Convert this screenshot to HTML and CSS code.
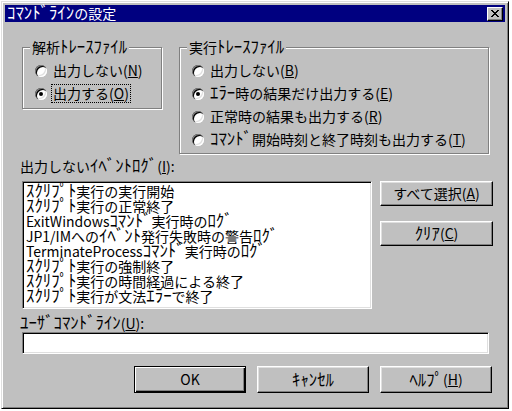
FILE: index.html
```html
<!DOCTYPE html>
<html lang="ja">
<head>
<meta charset="utf-8">
<link rel="stylesheet" href="styles.css">
</head>
<body>
<div class="dialog">
  <div class="titlebar">
    <span class="title"><span class="hk">ｺﾏﾝﾄﾞﾗｲﾝ</span>の設定</span>
    <span class="close">
      <svg width="8" height="7" viewBox="0 0 8 7"><path d="M0 0h2v1h1v1h2V1h1V0h2v1H7v1H6v1H5v1h1v1h1v1h1v1H6V6H5V5H3v1H2v1H0V6h1V5h1V4h1V3H2V2H1V1H0z" fill="#000"/></svg>
    </span>
  </div>
  <div class="content">
    <div class="groups">
      <div class="group group-parse">
        <div class="group-title">解析<span class="hk">ﾄﾚｰｽﾌｧｲﾙ</span></div>
        <div class="option"><span class="radio"></span><span class="opt-label">出力しない(<u>N</u>)</span></div>
        <div class="option"><span class="radio checked"></span><span class="opt-label focus">出力する(<u>O</u>)</span></div>
      </div>
      <div class="group group-exec">
        <div class="group-title">実行<span class="hk">ﾄﾚｰｽﾌｧｲﾙ</span></div>
        <div class="option"><span class="radio"></span><span class="opt-label">出力しない(<u>B</u>)</span></div>
        <div class="option"><span class="radio checked"></span><span class="opt-label"><span class="hk">ｴﾗｰ</span>時の結果だけ出力する(<u>E</u>)</span></div>
        <div class="option"><span class="radio"></span><span class="opt-label">正常時の結果も出力する(<u>R</u>)</span></div>
        <div class="option"><span class="radio"></span><span class="opt-label"><span class="hk">ｺﾏﾝﾄﾞ</span>開始時刻と終了時刻も出力する(<u>T</u>)</span></div>
      </div>
    </div>

    <div class="field-label label-events">出力しない<span class="hk">ｲﾍﾞﾝﾄﾛｸﾞ</span>(<u>I</u>):</div>
    <div class="list-row">
      <div class="listbox">
        <div class="item"><span class="hk">ｽｸﾘﾌﾟﾄ</span>実行の実行開始</div>
        <div class="item"><span class="hk">ｽｸﾘﾌﾟﾄ</span>実行の正常終了</div>
        <div class="item">ExitWindows<span class="hk">ｺﾏﾝﾄﾞ</span>実行時の<span class="hk">ﾛｸﾞ</span></div>
        <div class="item">JP1/IMへの<span class="hk">ｲﾍﾞﾝﾄ</span>発行失敗時の警告<span class="hk">ﾛｸﾞ</span></div>
        <div class="item">TerminateProcess<span class="hk">ｺﾏﾝﾄﾞ</span>実行時の<span class="hk">ﾛｸﾞ</span></div>
        <div class="item"><span class="hk">ｽｸﾘﾌﾟﾄ</span>実行の強制終了</div>
        <div class="item"><span class="hk">ｽｸﾘﾌﾟﾄ</span>実行の時間経過による終了</div>
        <div class="item"><span class="hk">ｽｸﾘﾌﾟﾄ</span>実行が文法<span class="hk">ｴﾗｰ</span>で終了</div>
      </div>
      <div class="side-buttons">
        <div class="btn">すべて選択(<u>A</u>)</div>
        <div class="btn"><span class="hk">ｸﾘｱ</span>(<u>C</u>)</div>
      </div>
    </div>

    <div class="field-label label-user"><span class="hk">ﾕｰｻﾞｺﾏﾝﾄﾞﾗｲﾝ</span>(<u>U</u>):</div>
    <div class="textbox"></div>

    <div class="actions">
      <div class="btn default">OK</div>
      <div class="btn"><span class="hk">ｷｬﾝｾﾙ</span></div>
      <div class="btn"><span class="hk">ﾍﾙﾌﾟ</span>(<u>H</u>)</div>
    </div>
  </div>
</div>
</body>
</html>
```

FILE: styles.css
```css
* { box-sizing: border-box; }

html, body {
  margin: 0;
  padding: 0;
  background: #ffffff;
}

body {
  font-family: "Noto Sans CJK JP", "Liberation Sans", sans-serif;
  font-size: 14px;
  line-height: 15px;
  color: #000;
}

u { text-decoration: underline; text-underline-offset: 1px; }

.hk {
  font-size: 1.2em;
  line-height: 1px;
}

.dialog {
  margin: 1px 0 0 1px;
  width: 508px;
  height: 408px;
  background: #c0c0c0;
  border: 1px solid;
  border-color: #dfdfdf #000 #000 #dfdfdf;
  box-shadow: inset 1px 1px #fff, inset -1px -1px #808080;
  padding: 3px;
  display: flex;
  flex-direction: column;
}

.titlebar {
  height: 17px;
  background: #000080;
  color: #fff;
  display: flex;
  align-items: center;
  justify-content: space-between;
  padding: 0 2px 0 2px;
}

.title {
  font-size: 14px;
  line-height: 17px;
}

.close {
  width: 16px;
  height: 14px;
  background: #c0c0c0;
  border: 1px solid;
  border-color: #fff #000 #000 #fff;
  box-shadow: inset -1px -1px #808080;
  display: flex;
  align-items: center;
  justify-content: center;
  padding-bottom: 1px;
}

.content {
  padding: 0 0 0 15px;
  display: flex;
  flex-direction: column;
}

.groups {
  display: flex;
  align-items: flex-start;
  margin-top: 25px;
  margin-left: 2px;
}

.group {
  border: 1px solid #808080;
  box-shadow: inset 1px 1px #fff, 1px 1px #fff;
  padding-left: 12px;
}

.group-parse {
  width: 140px;
  padding-bottom: 3px;
}

.group-exec {
  width: 310px;
  margin-left: 17px;
  padding-bottom: 2px;
}

.group-title {
  width: fit-content;
  height: 14px;
  line-height: 14px;
  margin: -8px 0 0 -5px;
  padding: 0 2px;
  background: #c0c0c0;
  margin-bottom: 5px;
}

.option {
  display: flex;
  align-items: center;
  height: 23px;
}

.radio {
  position: relative;
  flex: none;
  width: 12px;
  height: 12px;
  border-radius: 50%;
  background: #fff;
  box-shadow: inset 1px 1px #808080, inset 2px 2px #000, inset -1px -1px #fff, inset -2px -2px #dfdfdf;
}

.radio.checked::after {
  content: "";
  position: absolute;
  left: 4px;
  top: 4px;
  width: 4px;
  height: 4px;
  border-radius: 50%;
  background: #000;
}

.opt-label {
  margin-left: 4px;
  padding: 1px 1px;
  border: 1px solid transparent;
  white-space: nowrap;
  line-height: 15px;
}

.opt-label.focus {
  border: 1px dotted #000;
}

.field-label {
  white-space: nowrap;
  height: 15px;
}

.label-events {
  margin-top: 5px;
}

.list-row {
  display: flex;
  align-items: flex-start;
  margin-top: 7px;
  margin-left: 2px;
}

.listbox {
  width: 350px;
  height: 128px;
  background: #fff;
  border: 1px solid;
  border-color: #808080 #fff #fff #808080;
  box-shadow: inset 1px 1px #000, inset -1px -1px #dfdfdf;
  padding: 2px 2px 0 3px;
}

.item {
  white-space: nowrap;
  height: 15px;
  line-height: 15px;
}

.side-buttons {
  display: flex;
  flex-direction: column;
  gap: 15px;
  margin-left: 8px;
}

.btn {
  width: 113px;
  height: 25px;
  background: #c0c0c0;
  border: 1px solid;
  border-color: #fff #000 #000 #fff;
  box-shadow: inset -1px -1px #808080, inset 1px 1px #dfdfdf;
  display: flex;
  align-items: center;
  justify-content: center;
  white-space: nowrap;
}

.label-user {
  margin-top: 7px;
}

.textbox {
  width: 467px;
  height: 22px;
  margin-top: 1px;
  margin-left: 2px;
  background: #fff;
  border: 1px solid;
  border-color: #808080 #fff #fff #808080;
  box-shadow: inset 1px 1px #000, inset -1px -1px #dfdfdf;
}

.actions {
  display: flex;
  gap: 11px;
  margin-top: 12px;
  margin-left: 114px;
}

.actions .btn {
  width: 112px;
  height: 27px;
}

.btn.default {
  border-color: #000;
  box-shadow: inset 1px 1px #fff, inset -1px -1px #000, inset -2px -2px #808080;
}
```
